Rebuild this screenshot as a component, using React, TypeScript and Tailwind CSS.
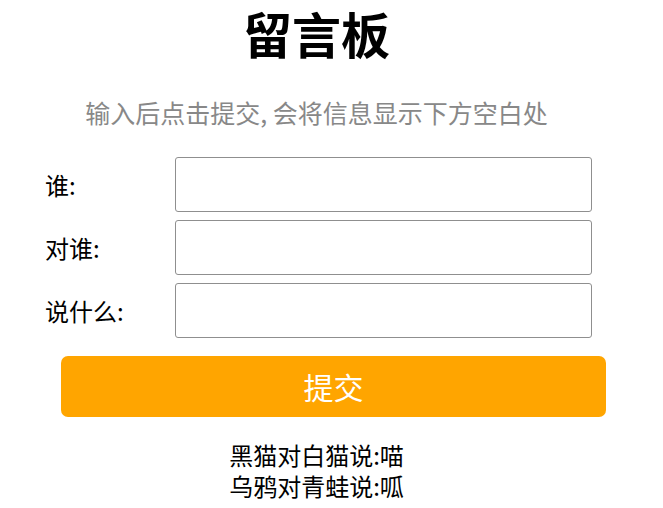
import { useState } from "react";

export default function App() {
  const [who, setWho] = useState("");
  const [toWhom, setToWhom] = useState("");
  const [what, setWhat] = useState("");
  const [messages, setMessages] = useState([
    "黑猫对白猫说:喵",
    "乌鸦对青蛙说:呱",
  ]);

  const fields = [
    { label: "谁:", value: who, set: setWho },
    { label: "对谁:", value: toWhom, set: setToWhom },
    { label: "说什么:", value: what, set: setWhat },
  ];

  const submit = () => {
    if (!who || !toWhom || !what) return;
    setMessages([...messages, `${who}对${toWhom}说:${what}`]);
    setWho("");
    setToWhom("");
    setWhat("");
  };

  return (
    <div className="w-[633px] bg-white text-black font-['Noto_Sans_CJK_SC','Noto_Sans',sans-serif]">
      {/* Title */}
      <h1 className="pt-[2px] text-center text-[49px] font-bold leading-[62px]">留言板</h1>
      <p className="mt-[32px] text-center text-[25px] leading-[32px] text-[#888888]">
        输入后点击提交, 会将信息显示下方空白处
      </p>

      {/* Form */}
      <div className="mt-[29px] flex flex-col gap-[8px]">
        {fields.map((f) => (
          <div key={f.label} className="flex items-center pl-[45px]">
            <label className="w-[130px] text-[24px] leading-[30px]">{f.label}</label>
            <input
              value={f.value}
              onChange={(e) => f.set(e.target.value)}
              className="h-[55px] w-[417px] rounded-[3px] border border-[#8f8f8f] px-2 text-[20px] outline-none"
            />
          </div>
        ))}
      </div>

      <button
        onClick={submit}
        className="ml-[61px] mt-[18px] h-[61px] w-[545px] rounded-[7px] bg-[#ffa500] text-[30px] text-white"
      >
        提交
      </button>

      {/* Messages */}
      <div className="mt-[22px] text-center text-[24px] leading-[31px]">
        {messages.map((m, i) => (
          <div key={i}>{m}</div>
        ))}
      </div>
    </div>
  );
}
